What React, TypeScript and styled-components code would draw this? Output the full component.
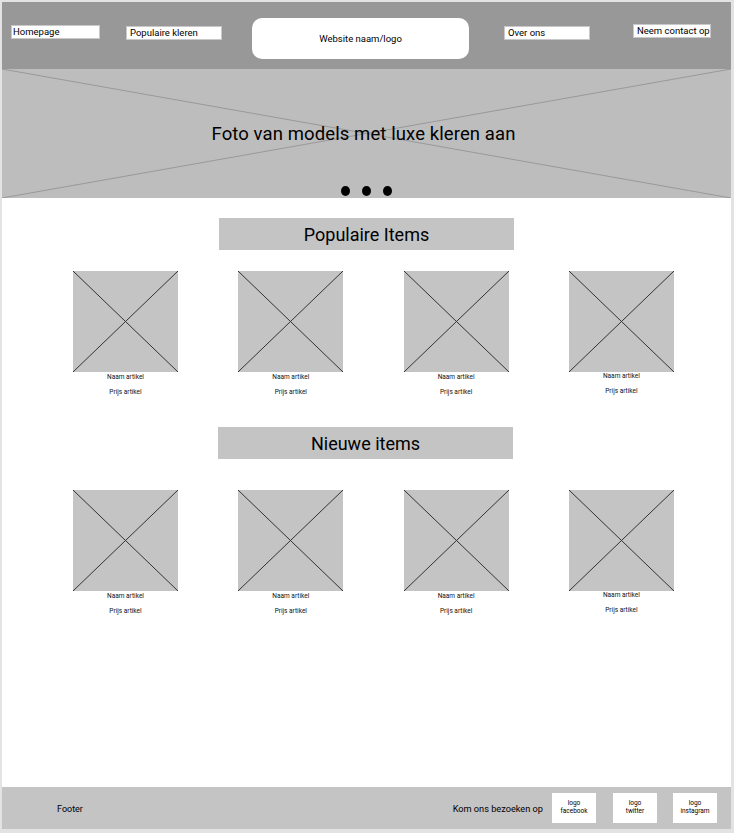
import React from "react";
import styled, { createGlobalStyle } from "styled-components";

const GlobalStyle = createGlobalStyle`
  html, body {
    margin: 0;
    padding: 0;
    background: #ffffff;
  }
  * {
    box-sizing: border-box;
  }
`;

type Product = { name: string; price: string };

const products: Product[] = [
  { name: "Naam artikel", price: "Prijs artikel" },
  { name: "Naam artikel", price: "Prijs artikel" },
  { name: "Naam artikel", price: "Prijs artikel" },
  { name: "Naam artikel", price: "Prijs artikel" },
];

const Frame = styled.div`
  width: 734px;
  height: 833px;
  border-style: solid;
  border-color: #e3e3e3;
  border-width: 2px 3px 4px 2px;
  display: flex;
  flex-direction: column;
  font-family: Roboto, "Liberation Sans", sans-serif;
  color: #000;
  background: #fff;
`;

const Header = styled.header`
  height: 67px;
  background: #989898;
  display: flex;
  align-items: flex-start;
  padding-left: 9px;
  flex-shrink: 0;
`;

const NavItem = styled.div<{ $width: number; $gap: number; $top: number }>`
  width: ${(p) => p.$width}px;
  margin-left: ${(p) => p.$gap}px;
  margin-top: ${(p) => p.$top}px;
  height: 14px;
  background: #fff;
  border: 1px solid #c8c8c8;
  font-size: 9.5px;
  line-height: 11px;
  padding-left: ${(p) => (p.$gap > 0 ? 3 : 1)}px;
  white-space: nowrap;
`;

const LogoBox = styled.div`
  width: 217px;
  height: 41px;
  margin-left: 30px;
  margin-top: 16px;
  background: #fff;
  border-radius: 10px;
  display: flex;
  align-items: center;
  justify-content: center;
  font-size: 9.5px;
`;

const Hero = styled.section`
  position: relative;
  height: 129px;
  background: #bdbdbd;
  display: flex;
  align-items: center;
  justify-content: center;
  flex-shrink: 0;
`;

const Cross = styled.svg`
  position: absolute;
  inset: 0;
  width: 100%;
  height: 100%;
`;

const HeroTitle = styled.h1`
  position: relative;
  margin: 0 6px 0 0;
  font-size: 18.5px;
  font-weight: 400;
  letter-spacing: 0.1px;
`;

const Dots = styled.div`
  position: absolute;
  bottom: 2px;
  left: 0;
  right: 0;
  display: flex;
  justify-content: center;
  gap: 12px;
`;

const Dot = styled.span`
  width: 9px;
  height: 10px;
  border-radius: 50%;
  background: #000;
`;

const Main = styled.main`
  flex: 1;
  display: flex;
  flex-direction: column;
`;

const SectionTitle = styled.h2<{ $top: number; $shift: number }>`
  align-self: center;
  width: 295px;
  height: 32px;
  margin: ${(p) => p.$top}px 0 0 ${(p) => p.$shift}px;
  background: #c4c4c4;
  display: flex;
  align-items: center;
  justify-content: center;
  font-size: 18px;
  font-weight: 400;
`;

const Grid = styled.div<{ $top: number }>`
  display: grid;
  grid-template-columns: repeat(4, 105px);
  column-gap: 60.3px;
  padding-left: 71px;
  margin-top: ${(p) => p.$top}px;
`;

const Card = styled.div`
  display: flex;
  flex-direction: column;
  align-items: center;
`;

const ImageBox = styled.div`
  position: relative;
  width: 105px;
  height: 101px;
  background: #c4c4c4;
`;

const Caption = styled.div<{ $top: number }>`
  font-size: 6.5px;
  line-height: 8px;
  color: #111;
  margin-top: ${(p) => p.$top}px;
`;

const Footer = styled.footer`
  height: 42px;
  background: #c4c4c4;
  display: flex;
  align-items: center;
  padding: 0 14px 0 55px;
  flex-shrink: 0;
`;

const FooterLabel = styled.span`
  font-size: 9px;
  margin-top: 2px;
`;

const Socials = styled.div`
  margin-left: auto;
  display: flex;
  align-items: center;
`;

const VisitText = styled.span`
  font-size: 9.2px;
  margin-right: 9px;
`;

const LogoTile = styled.div<{ $gap: number }>`
  width: 44px;
  height: 30px;
  margin-left: ${(p) => p.$gap}px;
  background: #fff;
  display: flex;
  align-items: center;
  justify-content: center;
  text-align: center;
  font-size: 6.5px;
  line-height: 8px;
  padding-bottom: 2px;
`;

const Placeholder = ({ stroke }: { stroke: string }) => (
  <Cross viewBox="0 0 100 100" preserveAspectRatio="none">
    <line x1="0" y1="0" x2="100" y2="100" stroke={stroke} strokeWidth="1" vectorEffect="non-scaling-stroke" />
    <line x1="100" y1="0" x2="0" y2="100" stroke={stroke} strokeWidth="1" vectorEffect="non-scaling-stroke" />
  </Cross>
);

const ProductRow = ({ top }: { top: number }) => (
  <Grid $top={top}>
    {products.map((p, i) => (
      <Card key={i}>
        <ImageBox>
          <Placeholder stroke="#333" />
        </ImageBox>
        <Caption $top={i === 3 ? 0 : 1}>{p.name}</Caption>
        <Caption $top={7}>{p.price}</Caption>
      </Card>
    ))}
  </Grid>
);

export default function App() {
  return (
    <>
      <GlobalStyle />
      <Frame>
        <Header>
          <NavItem $width={89} $gap={0} $top={23}>Homepage</NavItem>
          <NavItem $width={96} $gap={26} $top={24}>Populaire kleren</NavItem>
          <LogoBox>Website naam/logo</LogoBox>
          <NavItem $width={86} $gap={35} $top={24}>Over ons</NavItem>
          <NavItem $width={78} $gap={43} $top={22}>Neem contact op</NavItem>
        </Header>
        <Hero>
          <Placeholder stroke="#999" />
          <HeroTitle>Foto van models met luxe kleren aan</HeroTitle>
          <Dots>
            <Dot />
            <Dot />
            <Dot />
          </Dots>
        </Hero>
        <Main>
          <SectionTitle $top={20} $shift={0}>Populaire Items</SectionTitle>
          <ProductRow top={21} />
          <SectionTitle $top={31} $shift={-2}>Nieuwe items</SectionTitle>
          <ProductRow top={31} />
        </Main>
        <Footer>
          <FooterLabel>Footer</FooterLabel>
          <Socials>
            <VisitText>Kom ons bezoeken op</VisitText>
            <LogoTile $gap={0}>logo<br />facebook</LogoTile>
            <LogoTile $gap={17}>logo<br />twitter</LogoTile>
            <LogoTile $gap={16}>logo<br />instagram</LogoTile>
          </Socials>
        </Footer>
      </Frame>
    </>
  );
}
